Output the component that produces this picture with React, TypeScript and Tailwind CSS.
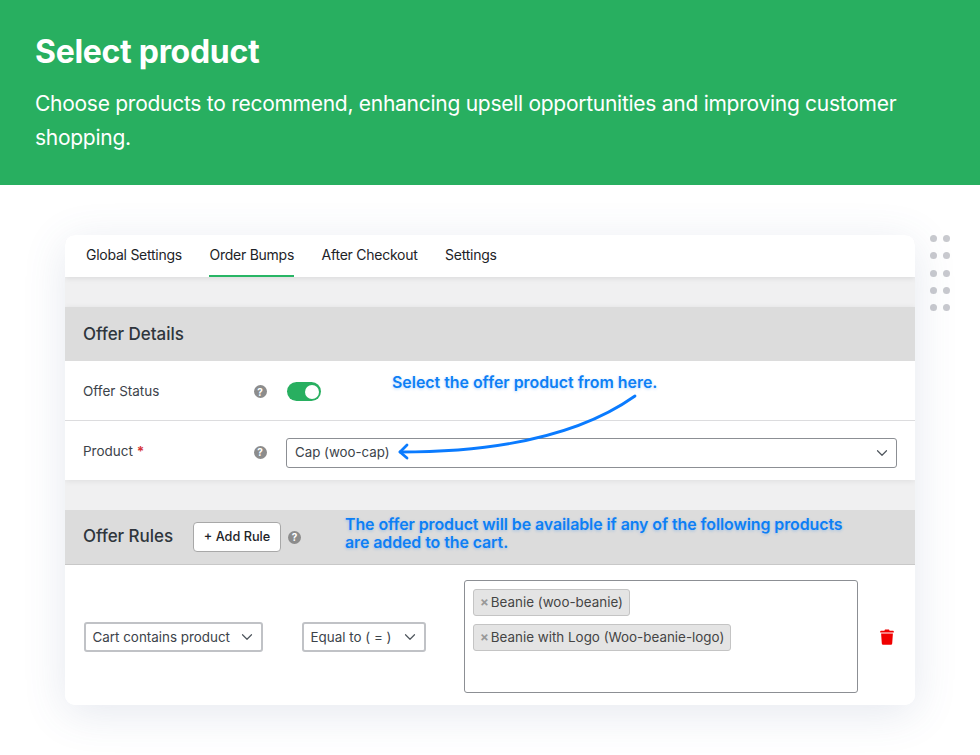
import React from 'react';
import { ChevronDown } from 'lucide-react';

// Small round help badge used next to field labels
const HelpIcon = () => (
  <span className="flex h-[13px] w-[13px] items-center justify-center rounded-full bg-[#8c8c8c] text-[10px] font-bold leading-none text-white">
    ?
  </span>
);

const TrashIcon = () => (
  <svg width="14" height="16" viewBox="0 0 14 16" fill="#f00000">
    <path d="M5 0.6h4l0.6 1.2H13a0.8 0.8 0 0 1 0.8 0.8v0.9H0.2v-0.9A0.8 0.8 0 0 1 1 1.8h3.4z" />
    <path d="M1.1 4.4h11.8l-0.7 10.2a1.3 1.3 0 0 1-1.3 1.2H3.1a1.3 1.3 0 0 1-1.3-1.2z" />
  </svg>
);

const Tag = ({ label }: { label: string }) => (
  <span className="flex h-[27px] w-fit items-center rounded-[3px] border border-[#c4c4c4] bg-[#e4e4e4] pl-[6px] pr-[6px] text-[13.4px] text-[#444]">
    <span className="mr-[2px] text-[13px] font-bold leading-none text-[#999]">×</span>
    {label}
  </span>
);

const SelectBox = ({ label, className }: { label: string; className: string }) => (
  <div className={`mt-[2px] flex h-[30px] items-center justify-between rounded-[3px] border-2 border-[#c0c2c6] pl-[7px] pr-[5px] text-[13.4px] text-[#3c434a] ${className}`}>
    <span>{label}</span>
    <ChevronDown size={18} strokeWidth={1.6} className="text-[#50575e]" />
  </div>
);

const tabs = ['Global Settings', 'Order Bumps', 'After Checkout', 'Settings'];

export default function App() {
  return (
    <div className="relative h-[755px] w-[980px] overflow-hidden bg-white font-['Inter',sans-serif]">
      <header className="h-[185px] bg-[#28af60] px-[35px] pt-[33px] text-white">
        <h1 className="text-[32px] font-bold leading-[38px] tracking-[-0.3px]">Select product</h1>
        <p className="mt-[16px] text-[21px] leading-[34px] tracking-[-0.27px]">
          Choose products to recommend, enhancing upsell opportunities and improving customer shopping.
        </p>
      </header>

      {/* decorative dots */}
      <div className="absolute left-[930px] top-[235px] grid grid-cols-2 gap-x-[6px] gap-y-[10.3px]">
        {Array.from({ length: 10 }).map((_, i) => (
          <span key={i} className="h-[7px] w-[7px] rounded-full bg-[#c9cacf]" />
        ))}
      </div>

      <main className="relative mx-[65px] mt-[50px] h-[470px] overflow-hidden rounded-[10px] bg-white shadow-[0_8px_44px_rgba(70,90,140,0.14)]">
        <nav className="relative flex h-[42px] gap-[27.5px] bg-white pl-[21px] shadow-[0_1px_6px_rgba(0,0,0,0.1)]">
          {tabs.map((t, i) => (
            <span
              key={t}
              className={`flex items-center text-[14px] tracking-[-0.25px] text-[#1d2327] ${i === 1 ? 'border-b-2 border-[#28b565] pb-[2px]' : 'pb-[4px]'}`}
            >
              {t}
            </span>
          ))}
        </nav>
        <div className="h-[30px] bg-[#f0f0f1]" />

        <section className="relative shadow-[0_1px_6px_rgba(0,0,0,0.08)]">
          <div className="flex h-[54px] items-center bg-[#dcdcdc] pl-[18px] pt-[1px] text-[17px] font-medium tracking-[-0.05px] text-[#2f363c]">
            Offer Details
          </div>
          <div className="flex h-[60px] items-center border-b border-[#dcdcde] bg-white pl-[18px] pt-[2px]">
            <span className="w-[170.5px] text-[13.5px] text-[#3c434a]">Offer Status</span>
            <HelpIcon />
            <span className="ml-[20px] flex h-[19px] w-[34px] items-center justify-end rounded-full bg-[#28af60] pr-[2px]">
              <span className="h-[14px] w-[14px] rounded-full bg-white" />
            </span>
          </div>
          <div className="flex h-[59px] items-center bg-white pl-[18px] pr-[18px] pt-[3px]">
            <span className="mb-[2px] w-[170.5px] text-[13.5px] text-[#3c434a]">
              Product <span className="font-bold text-[#d63638]">*</span>
            </span>
            <HelpIcon />
            <div className="ml-[19.5px] mt-[2px] flex h-[30px] flex-1 items-center justify-between rounded-[3px] border border-[#8c8f94] pl-2 pr-[5px] text-[13.3px] text-[#3c434a]">
              <span>Cap (woo-cap)</span>
              <ChevronDown size={18} strokeWidth={1.6} className="text-[#50575e]" />
            </div>
          </div>
        </section>
        <div className="h-[30px] bg-[#f0f0f1]" />

        <section>
          <div className="flex h-[55px] items-center border-b border-[#c8c8c8] bg-[#dcdcdc] pl-[18px]">
            <span className="text-[17px] font-medium tracking-[-0.05px] text-[#2f363c]">Offer Rules</span>
            <span className="ml-[20px] flex h-[30px] w-[88px] items-center justify-center rounded-[4px] border border-[#a8a8a8] bg-white text-[12.7px] font-medium text-[#1d2327]">
              + Add Rule
            </span>
            <span className="ml-[7px]">
              <HelpIcon />
            </span>
            <p className="ml-[44px] w-[520px] pb-[7px] text-[15.9px] font-semibold leading-[18px] tracking-[-0.06px] text-[#0d7ff5] [text-shadow:0_1px_3px_rgba(13,127,245,0.3)]">
              The offer product will be available if any of the following products are added to the cart.
            </p>
          </div>
          <div className="flex h-[140px] items-center bg-white pl-[18.5px] pt-[2px]">
            <SelectBox label="Cart contains product" className="w-[179px]" />
            <SelectBox label="Equal to ( = )" className="ml-[39px] w-[124px]" />
            <div className="ml-[38.5px] flex h-[113px] w-[394px] flex-col gap-[8px] rounded-[3px] border border-[#8c8f94] pl-[8px] pt-[8px]">
              <Tag label="Beanie (woo-beanie)" />
              <Tag label="Beanie with Logo (Woo-beanie-logo)" />
            </div>
            <span className="ml-[22px] mt-[2px]">
              <TrashIcon />
            </span>
          </div>
        </section>

        {/* annotation over the details rows */}
        <span className="absolute left-[327px] top-[139px] text-[15.9px] font-semibold leading-[18px] text-[#0d7ff5] [text-shadow:0_1px_3px_rgba(13,127,245,0.3)]">
          Select the offer product from here.
        </span>
        <svg className="absolute left-[325px] top-[150px]" width="260" height="80" viewBox="0 0 260 80" fill="none">
          <path d="M245 11C190 50 110 67 10 67" stroke="#0a7bff" strokeWidth="2.8" strokeLinecap="round" />
          <path d="M17 60L10 67L17 73" stroke="#0a7bff" strokeWidth="2.8" strokeLinecap="round" strokeLinejoin="round" />
        </svg>
      </main>
    </div>
  );
}
